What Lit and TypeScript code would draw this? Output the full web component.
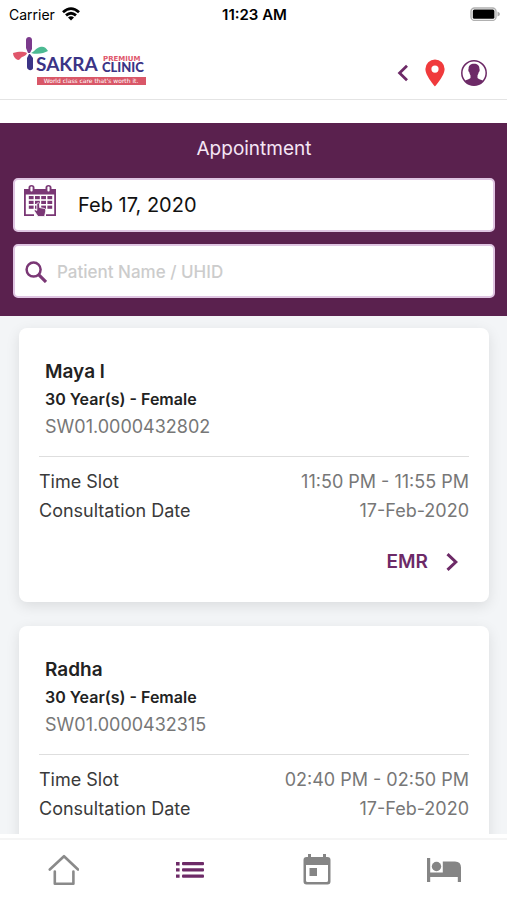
import { LitElement, html, css, svg } from "lit";
import { customElement, property } from "lit/decorators.js";

interface Appointment {
  name: string;
  details: string;
  uhid: string;
  slot: string;
  date: string;
}

const appointments: Appointment[] = [
  { name: "Maya l", details: "30 Year(s) - Female", uhid: "SW01.0000432802", slot: "11:50 PM - 11:55 PM", date: "17-Feb-2020" },
  { name: "Radha", details: "30 Year(s) - Female", uhid: "SW01.0000432315", slot: "02:40 PM - 02:50 PM", date: "17-Feb-2020" },
];

const logo = html`<svg width="136" height="52" viewBox="0 0 136 52" role="img" aria-label="Sakra Premium Clinic">
  <path fill="#7b3a8c" d="M13 4c0-4 6-4 6 0v9l-2 4h-2l-2-5z" />
  <path fill="#e0566b" d="M0 17c5-1 9-2 14 0-1 3-3 3-5 4-2 1-2 3-4 3-3-1-5-4-5-7z" />
  <path fill="#4cba92" d="M18 17c3-1 5-5 9-6 3-1 6 0 8 4-4 2-10 4-17 2z" />
  <path fill="#3b3486" d="M14 22l2-4h1l3 4v10c0 3-6 3-6-1z" />
  <text class="sakra" x="23" y="35">SAKRA</text>
  <text class="premium" x="90" y="25">PREMIUM</text>
  <text class="clinic" x="89" y="36">CLINIC</text>
  <rect x="24" y="41" width="109" height="8" fill="#d95768" />
  <text class="tagline" x="78" y="47" text-anchor="middle">World class care that's worth it.</text>
</svg>`;

const wifi = html`<svg width="18" height="14" viewBox="0 0 18 14" aria-hidden="true">
  <path fill="none" stroke="#000" stroke-width="2.800" d="M1 5.200Q9-2 17 5.200M4 8.400Q9 4 14 8.400" />
  <path d="M9 13.600L6 10.500Q9 8 12 10.500z" />
</svg>`;

const battery = html`<svg width="30" height="14" viewBox="0 0 30 14" role="img" aria-label="Battery full">
  <rect x="1" y="1" width="25" height="12.400" rx="3.500" fill="#fff" stroke="#b0b0b0" stroke-width="1.400" />
  <rect x="2.800" y="2.600" width="21.600" height="9.200" rx="1.500" />
  <path fill="#aaa" d="M27.500 4.500q2.500 1 2.500 2.500t-2.500 2.500z" />
</svg>`;

const backIcon = html`<svg width="12" height="18" viewBox="0 0 12 18"><path fill="none" stroke="#6d2a67" stroke-width="2.800" d="M10 1.800L2.600 9l7.400 7.200" /></svg>`;

const pinIcon = html`<svg width="20" height="28" viewBox="0 0 20 28"><path fill="#f03a3c" fill-rule="evenodd" d="M10 0.500a9.600 9.600 0 0 0-9.600 9.600C.4 17 10 27.500 10 27.500S19.600 17 19.600 10.100A9.600 9.600 0 0 0 10 .5zM10 6.500a3.600 3.600 0 1 1 0 7.200a3.600 3.600 0 0 1 0-7.200z" /></svg>`;

const profileIcon = html`<svg width="26" height="26" viewBox="0 0 26 26">
  <circle cx="13" cy="13" r="12.200" fill="#fff" stroke="#6d2a67" stroke-width="1.500" />
  <path fill="#6d2a67" d="M13 3.700c-3.600 0-5.700 2-5.400 5.300-.5.300-.4 2.400.6 3 .3 1.600.9 2.600 1.300 3.400v2.600c-1 1.200-3.800 1.500-5.700 3A12 12 0 0 0 22.200 21c-1.900-1.500-4.700-1.800-5.700-3v-2.600c.4-.8 1-1.800 1.300-3.400 1-.6 1.100-2.700.6-3 .3-3.300-1.800-5.300-5.400-5.300z" />
</svg>`;

const cells = [11, 15.800, 20.600].flatMap((y) =>
  [4.800, 11, 17.200, 23.400].map((x) => svg`<rect x=${x} y=${y} width="4.800" height="3.200" />`)
);

const datePickIcon = html`<svg width="32" height="32" viewBox="0 0 32 32" fill="#7a3775" aria-hidden="true">
  <path d="M0 4h4.500V2.500q0-2.500 3-2.500t3 2.500V4h11V2.500q0-2.500 3-2.500t3 2.500V4H32v5.600H0z" />
  <rect x="6.400" y="1.600" width="2.200" height="5" rx="1" fill="#fff" />
  <rect x="23.400" y="1.600" width="2.200" height="5" rx="1" fill="#fff" />
  <path fill="none" stroke="#7a3775" stroke-width="1.800" d="M.9 8v22.200H10M22 30.200h9.100V8" />
  ${cells}
  <path stroke="#fff" stroke-width=".8" d="M12.800 18.500q1.500-1.500 2.700 0v4l5 1q1.500.5 1.300 2.500l-1.300 5.500h-6.500l-4-6q1-1.500 2.800 0z" />
</svg>`;

const searchIcon = html`<svg width="22" height="22" viewBox="0 0 22 22" aria-hidden="true">
  <circle cx="8.600" cy="8.600" r="7" fill="none" stroke="#7a3775" stroke-width="2.500" />
  <path stroke="#7a3775" stroke-width="3.200" d="M13.400 13.400l7.600 7.600" />
</svg>`;

const nextIcon = html`<svg width="12" height="18" viewBox="0 0 12 18" aria-hidden="true"><path fill="none" stroke="#6d2a67" stroke-width="3" d="M1.500 1.200L9.800 9l-8.300 7.800" /></svg>`;

const homeIcon = html`<svg width="32" height="32" viewBox="0 0 32 32" fill="none" stroke="#8a8a8a" stroke-width="2.600" stroke-linejoin="round" stroke-linecap="round">
  <path d="M2.800 15.500L17 2.200l14 13.300M7.800 17.500v12.200h18.600V17.500" />
</svg>`;

const listIcon = html`<svg width="30" height="18" viewBox="0 0 30 18" fill="#6d2a67">
  <path d="M1 1h3.600v3.400H1zM1 7.200h3.600v3.400H1zM1 13.400h3.600v3.400H1z" />
  <rect x="7" y="1" width="22" height="3.200" rx="1" />
  <rect x="7" y="7.300" width="22" height="3.200" rx="1" />
  <rect x="7" y="13.500" width="22" height="3.200" rx="1" />
</svg>`;

const calendarIcon = html`<svg width="28" height="32" viewBox="0 0 28 32">
  <path fill="#858585" fill-rule="evenodd" d="M5 0h3v3h12V0h3v3h1.500q3 0 3 3v21.500q0 3-3 3h-21q-3 0-3-3V6q0-3 3-3H5zM3 11v15.500q0 1.500 1.500 1.500h19q1.500 0 1.500-1.500V11zM6.500 14h7.500v8H6.500z" />
</svg>`;

const bedIcon = html`<svg width="34" height="24" viewBox="0 0 34 24" fill="#858585">
  <path d="M0 0h3.200v14.500h12.600V3.500H28q6 0 6 6V24h-3.200v-5H3.200v5H0z" />
  <circle cx="9.500" cy="8.500" r="4.700" />
</svg>`;

@customElement("appointment-card")
export class AppointmentCard extends LitElement {
  @property({ attribute: false }) item!: Appointment;

  static styles = css`
    :host {
      display: block;
      flex: none;
      padding: 0 20px 26px;
      border-radius: 8px;
      background: #fff;
      box-shadow: 0 4px 14px rgba(0, 0, 0, 0.1);
    }
    .patient {
      padding: 30px 6px 14px;
      border-bottom: 1px solid #dedede;
      color: #222;
    }
    .name {
      margin: 0;
      font-size: 19px;
      font-weight: 600;
      line-height: 28px;
    }
    .details {
      margin: 0;
      font-size: 16px;
      font-weight: 600;
      line-height: 26px;
    }
    .uhid {
      margin: 0;
      color: #777;
      font-size: 18px;
      line-height: 30px;
    }
    .facts {
      margin: 0;
      padding-top: 10px;
      font-size: 18px;
      line-height: 29px;
    }
    .row {
      display: flex;
      justify-content: space-between;
    }
    .term {
      color: #3a3a3a;
    }
    .value {
      margin: 0;
      color: #777;
    }
    .actions {
      display: flex;
      justify-content: flex-end;
      padding: 23px 11px 0 0;
    }
    .emr {
      display: flex;
      align-items: center;
      gap: 18px;
      padding: 0;
      border: 0;
      background: none;
      color: #6d2a67;
      font: 600 19px/28px Inter, sans-serif;
    }
  `;

  render() {
    const { name, details, uhid, slot, date } = this.item;
    return html`
      <div class="patient">
        <h2 class="name">${name}</h2>
        <p class="details">${details}</p>
        <p class="uhid">${uhid}</p>
      </div>
      <dl class="facts">
        <div class="row"><dt class="term">Time Slot</dt><dd class="value">${slot}</dd></div>
        <div class="row"><dt class="term">Consultation Date</dt><dd class="value">${date}</dd></div>
      </dl>
      <div class="actions"><button class="emr">EMR ${nextIcon}</button></div>
    `;
  }
}

@customElement("app-root")
export class AppRoot extends LitElement {
  static styles = css`
    :host {
      display: flex;
      flex-direction: column;
      height: 100vh;
      overflow: hidden;
      background: #fff;
      color: #222;
      font-family: Inter, sans-serif;
    }
    svg {
      display: block;
    }
    .status {
      display: grid;
      flex: none;
      grid-template-columns: 1fr auto 1fr;
      align-items: center;
      height: 28px;
      padding: 0 7px 0 9px;
      color: #000;
      font-size: 14px;
    }
    .carrier {
      display: flex;
      align-items: center;
      gap: 7px;
    }
    .clock {
      font-size: 15px;
      font-weight: 600;
    }
    .battery {
      justify-self: end;
    }
    .header {
      display: flex;
      flex: none;
      align-items: center;
      justify-content: space-between;
      padding: 8px 20px 11px 13px;
      border-bottom: 1px solid #e4e4e4;
    }
    .sakra,
    .clinic {
      fill: #3b3486;
      font-family: Lato, sans-serif;
      font-weight: 700;
    }
    .sakra {
      font-size: 19px;
    }
    .clinic {
      font-size: 13px;
      font-weight: 900;
    }
    .premium {
      fill: #e0566b;
      font: 700 7px "DejaVu Sans", sans-serif;
    }
    .tagline {
      fill: #fff;
      font: 6px "DejaVu Sans", sans-serif;
    }
    .tools {
      display: flex;
      align-items: center;
      gap: 16px;
      padding-top: 22px;
    }
    .tool {
      padding: 0;
      border: 0;
      background: none;
    }
    .filters {
      display: flex;
      flex: none;
      flex-direction: column;
      gap: 12px;
      margin-top: 23px;
      padding: 12px 12px 18px 13px;
      background: #5a214e;
    }
    .title {
      margin: 0;
      padding-bottom: 3px;
      color: #f5e6f5;
      font-size: 19px;
      font-weight: 400;
      line-height: 28px;
      text-align: center;
    }
    .field {
      display: flex;
      align-items: center;
      box-sizing: border-box;
      height: 54px;
      padding: 0 9px;
      border: 2px solid #dfc5e2;
      border-radius: 5px;
      background: #fff;
    }
    .pick {
      padding-bottom: 8px;
    }
    .input {
      flex: 1;
      min-width: 0;
      padding: 0;
      border: 0;
      outline: 0;
      background: none;
      color: #111;
      font: 20px Inter, sans-serif;
    }
    .date {
      margin-left: 22px;
    }
    .search {
      padding: 2px 10px 0;
    }
    .query {
      margin-left: 10px;
      font-size: 17px;
      font-weight: 500;
    }
    .query::placeholder {
      color: #ccc;
      opacity: 1;
    }
    .list {
      display: flex;
      flex: 1;
      flex-direction: column;
      gap: 24px;
      min-height: 0;
      margin-bottom: 4px;
      padding: 12px 18px 0 19px;
      overflow: hidden;
      background: #f3f5f7;
    }
    .nav {
      display: grid;
      flex: none;
      grid-template-columns: repeat(4, 1fr);
      height: 60px;
      border-top: 2px solid #f5f5f5;
    }
    .tab {
      display: grid;
      place-items: center;
    }
  `;

  render() {
    return html`
      <div class="status">
        <span class="carrier">Carrier ${wifi}</span>
        <span class="clock">11:23 AM</span>
        <span class="battery">${battery}</span>
      </div>
      <header class="header">
        ${logo}
        <div class="tools">
          <button class="tool" aria-label="Back">${backIcon}</button>
          <button class="tool" aria-label="Location">${pinIcon}</button>
          <button class="tool" aria-label="Profile">${profileIcon}</button>
        </div>
      </header>
      <section class="filters">
        <h1 class="title">Appointment</h1>
        <label class="field">
          <span class="pick">${datePickIcon}</span>
          <input class="input date" aria-label="Appointment date" value="Feb 17, 2020" />
        </label>
        <label class="field search">
          ${searchIcon}
          <input class="input query" type="text" aria-label="Search patients" placeholder="Patient Name / UHID" />
        </label>
      </section>
      <main class="list">
        ${appointments.map((item) => html`<appointment-card .item=${item}></appointment-card>`)}
      </main>
      <nav class="nav">
        <a class="tab" href="#home" aria-label="Home">${homeIcon}</a>
        <a class="tab" href="#appointments" aria-label="Appointments" aria-current="page">${listIcon}</a>
        <a class="tab" href="#calendar" aria-label="Calendar">${calendarIcon}</a>
        <a class="tab" href="#beds" aria-label="Inpatients">${bedIcon}</a>
      </nav>
    `;
  }
}
